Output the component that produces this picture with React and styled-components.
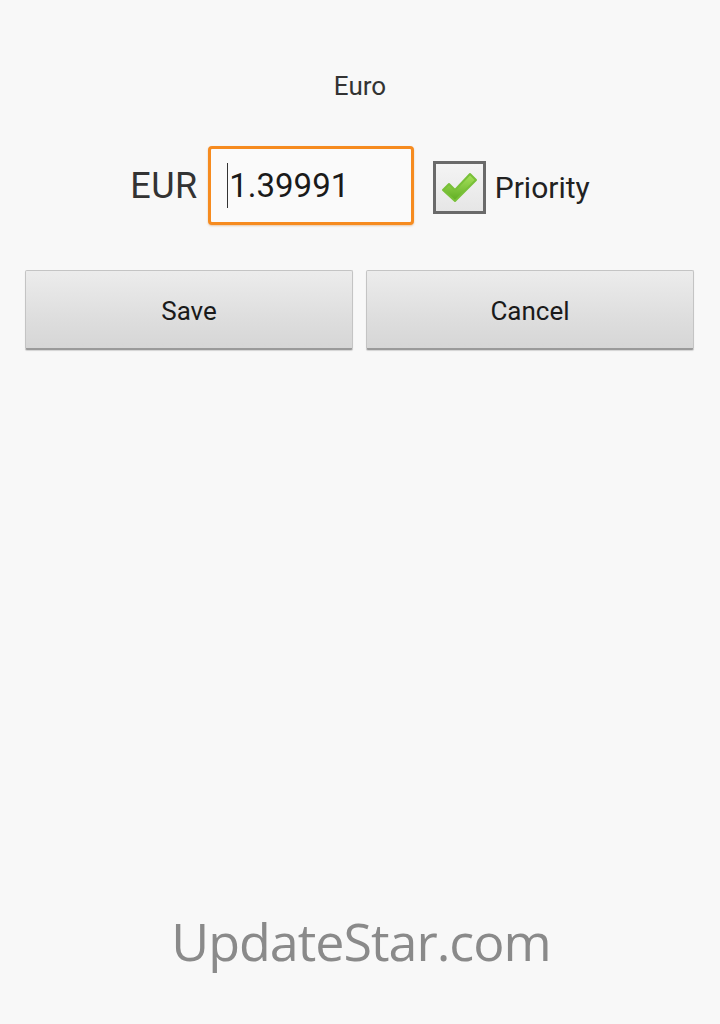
import React from 'react'
import styled, { createGlobalStyle } from 'styled-components';

const GlobalStyle = createGlobalStyle`
  html, body {
    margin: 0;
    padding: 0;
    background: #f8f8f8;
  }
`;

const App = () => {
  return (
    <Page>
      <GlobalStyle />
      <Title>Euro</Title>
      <EditRow>
        <Code>EUR</Code>
        <RateBox>
          <Caret />
          <RateText>1.39991</RateText>
        </RateBox>
        <CheckLabel>
          <CheckBox>
            <svg width="38" height="34" viewBox="0 0 38 34">
              <defs>
                <linearGradient id="tick" x1="0" y1="0" x2="0" y2="1">
                  <stop offset="0" stopColor="#a8e25c" />
                  <stop offset="1" stopColor="#5eac22" />
                </linearGradient>
              </defs>
              <path
                d="M3 20 L9 14 L15 20 L30 4 L36 10 L15 31 Z"
                fill="url(#tick)"
                stroke="#78c038"
                strokeWidth="2"
                strokeLinejoin="round"
              />
            </svg>
          </CheckBox>
          <CheckText>Priority</CheckText>
        </CheckLabel>
      </EditRow>
      <ButtonRow>
        <GrayButton>Save</GrayButton>
        <GrayButton>Cancel</GrayButton>
      </ButtonRow>
      <Spacer />
      <Watermark>UpdateStar.com</Watermark>
    </Page>
  )
}

export default App

const Page = styled.div`
    display: flex;
    flex-direction: column;
    align-items: center;
    height: 1024px;
    background: #f8f8f8;
    font-family: Roboto, "Liberation Sans", sans-serif;
    color: #222;
`;

const Title = styled.div`
    margin-top: 70px;
    font-size: 26px;
    line-height: 33px;
    color: #333;
`;

const EditRow = styled.div`
    display: flex;
    align-items: center;
    margin-top: 43px;
`;

const Code = styled.span`
    font-size: 36px;
    letter-spacing: 0.5px;
    color: #333;
    margin-right: 10px;
`;

const RateBox = styled.div`
    display: flex;
    align-items: center;
    box-sizing: border-box;
    width: 206px;
    height: 79px;
    border: 3px solid #f68b1f;
    border-radius: 4px;
    padding-left: 16px;
    background: #fafafa;
    box-shadow: 0 1px 2px rgba(200, 110, 20, 0.35);
`;

const Caret = styled.span`
    width: 1.5px;
    height: 45px;
    background: #333;
    margin-right: 1px;
`;

const RateText = styled.span`
    font-size: 33px;
    color: #1a1a1a;
`;

const CheckLabel = styled.div`
    display: flex;
    align-items: center;
    margin-left: 19px;
    margin-top: 3px;
`;

const CheckBox = styled.div`
    display: flex;
    align-items: center;
    justify-content: center;
    box-sizing: border-box;
    width: 53px;
    height: 53px;
    border: 3px solid #6a6a6a;
    background: linear-gradient(#f4f4f4, #e6e6e6);
`;

const CheckText = styled.span`
    font-size: 30px;
    color: #222;
    margin-left: 9px;
`;

const ButtonRow = styled.div`
    display: grid;
    grid-template-columns: 1fr 1fr;
    gap: 13px;
    align-self: stretch;
    margin: 45px 26px 0 25px;
`;

const GrayButton = styled.button`
    height: 80px;
    border: 1px solid #c4c4c4;
    border-bottom: 2px solid #9a9a9a;
    border-radius: 2px;
    background: linear-gradient(#ececec 0%, #e4e4e4 35%, #dedede 60%, #d6d6d6 100%);
    box-shadow: 0 1px 1px rgba(0, 0, 0, 0.15);
    font-family: Roboto, "Liberation Sans", sans-serif;
    font-size: 26px;
    color: #1a1a1a;
    padding: 2px 0 0;
`;

const Spacer = styled.div`
    flex: 1;
`;

const Watermark = styled.div`
    font-family: "Open Sans", "Noto Sans", sans-serif;
    font-size: 52px;
    letter-spacing: -1px;
    color: #8a8a8a;
    margin-bottom: 48px;
    margin-left: 2px;
`;
